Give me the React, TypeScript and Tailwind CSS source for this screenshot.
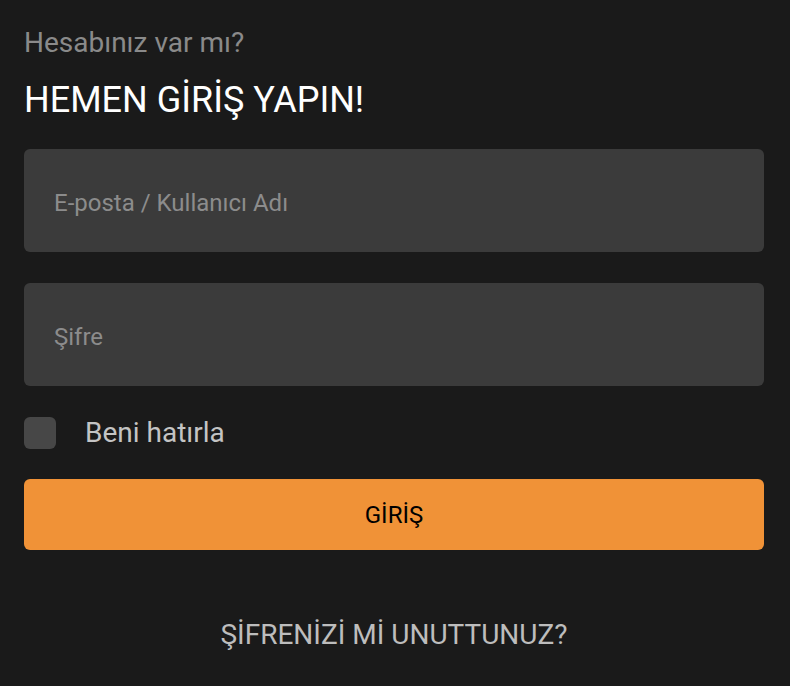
export default function App() {
  return (
    <div
      className="min-h-screen w-full bg-[#1a1a1a] pl-6 pr-[26px] pt-[26px]"
      style={{ fontFamily: 'Roboto, "Noto Sans", sans-serif' }}
    >
      <p className="text-[28px] leading-[34px] text-[#8a8a8a]">Hesabınız var mı?</p>
      <h1 className="mt-[19px] text-[36px] leading-[42px] text-white">HEMEN GİRİŞ YAPIN!</h1>

      <form className="mt-[28px] flex flex-col" onSubmit={(e) => e.preventDefault()}>
        <input
          type="text"
          placeholder="E-posta / Kullanıcı Adı"
          className="h-[103px] w-full rounded-md bg-[#3b3b3b] px-[30px] pt-1 text-[24px] text-white outline-none placeholder:text-[#8c8c8c]"
        />
        <input
          type="password"
          placeholder="Şifre"
          className="mt-[31px] h-[103px] w-full rounded-md bg-[#3b3b3b] px-[30px] pt-1 text-[24px] text-white outline-none placeholder:text-[#8c8c8c]"
        />

        <label className="mt-[31px] flex h-8 items-center gap-[29px]">
          <span className="h-8 w-8 rounded-md bg-[#474747]" />
          <span className="text-[28px] leading-8 text-[#c4c4c4]">Beni hatırla</span>
        </label>

        <button
          type="submit"
          className="mt-[30px] h-[71px] w-full rounded-md bg-[#f09237] text-[24px] text-black"
        >
          GİRİŞ
        </button>
      </form>

      <p className="mt-[68px] text-center text-[28px] leading-[34px] text-[#bdbdbd]">
        ŞİFRENİZİ Mİ UNUTTUNUZ?
      </p>
    </div>
  );
}
